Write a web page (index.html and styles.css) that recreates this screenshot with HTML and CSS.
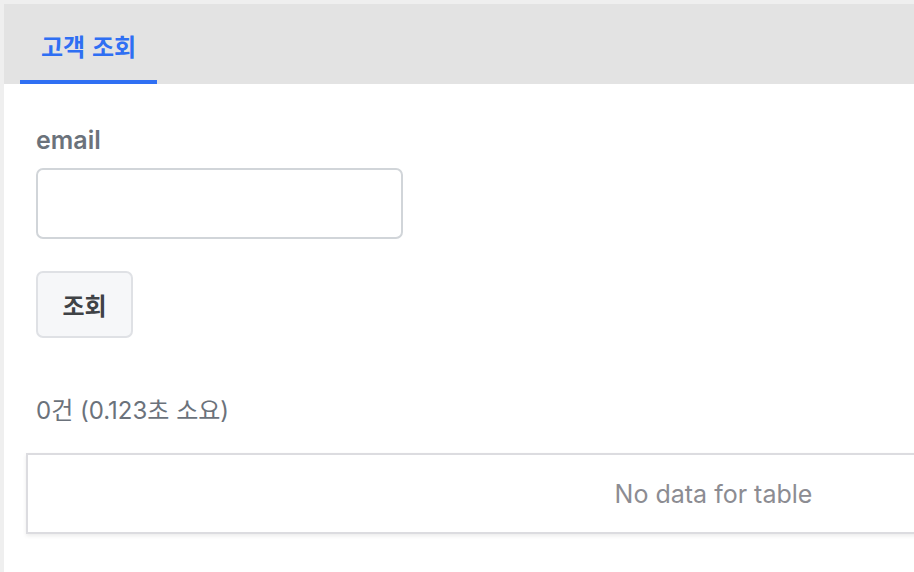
FILE: index.html
```html
<!DOCTYPE html>
<html lang="ko">
<head>
<meta charset="utf-8">
<link rel="stylesheet" href="styles.css">
</head>
<body>
<div class="card">
  <div class="tabs">
    <div class="tab">고객 조회</div>
  </div>
  <div class="content">
    <label class="label" for="email">email</label>
    <input class="input" id="email" type="text">
    <button class="btn" type="button">조회</button>
    <div class="summary">0건 (0.123초 소요)</div>
    <div class="table">
      <div class="empty">No data for table</div>
    </div>
  </div>
</div>
</body>
</html>
```

FILE: styles.css
```css
html, body {
  margin: 0;
  padding: 0;
  background: #efefef;
  overflow: hidden;
  width: 914px;
  height: 572px;
}
body {
  font-family: Inter, "Noto Sans CJK KR", sans-serif;
  padding: 4px 0 0 4px;
  box-sizing: border-box;
}
.card {
  background: #ffffff;
  width: 1500px;
  height: 568px;
  overflow: hidden;
}
.tabs {
  background: #e3e3e3;
  height: 80px;
  display: flex;
  padding-left: 16px;
}
.tab {
  font-family: "Noto Sans CJK KR", sans-serif;
  font-size: 24px;
  font-weight: 700;
  color: #2f6ff3;
  padding: 28px 21px 0;
  height: 80px;
  box-sizing: border-box;
  line-height: 28px;
  border-bottom: 4px solid #2f6ff3;
}
.content {
  padding: 39px 0 0 32px;
  display: flex;
  flex-direction: column;
  align-items: flex-start;
}
.label {
  font-size: 25px;
  font-weight: 600;
  color: #6b727b;
  line-height: 34px;
}
.input {
  margin-top: 11px;
  width: 367px;
  height: 71px;
  box-sizing: border-box;
  border: 2px solid #d1d5d9;
  border-radius: 7px;
  background: #fff;
  outline: none;
}
.btn {
  margin-top: 32px;
  width: 97px;
  height: 67px;
  box-sizing: border-box;
  border: 2px solid #dfe1e5;
  border-radius: 7px;
  background: #f6f7f9;
  font-family: "Noto Sans CJK KR", sans-serif;
  font-size: 24px;
  font-weight: 700;
  color: #3f4246;
  cursor: pointer;
  padding: 0;
}
.summary {
  margin-top: 57px;
  font-size: 24px;
  color: #6b727b;
  line-height: 32px;
}
.table {
  margin-top: 26px;
  margin-left: -10px;
  width: 1375px;
  height: 81px;
  box-sizing: border-box;
  border: 2px solid #dcdce0;
  box-shadow: 0 2px 4px rgba(0,0,0,0.08);
  display: flex;
  align-items: center;
  justify-content: center;
}
.empty {
  font-size: 25px;
  color: #8c8c92;
}
```
